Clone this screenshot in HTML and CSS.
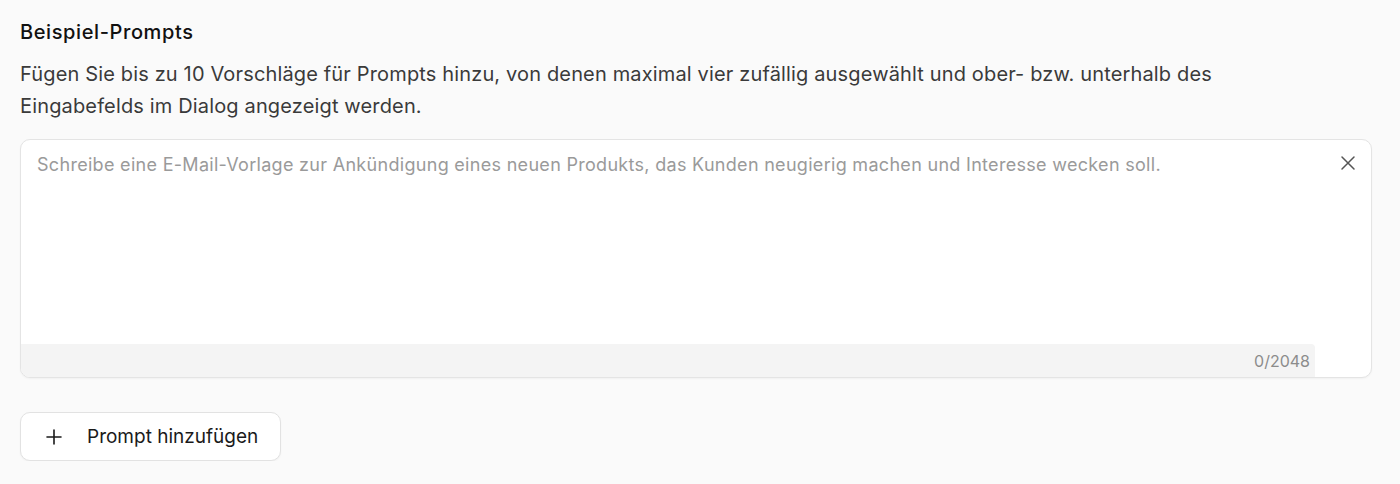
FILE: index.html
```html
<!DOCTYPE html>
<html lang="de">
  <head>
    <meta charset="UTF-8" />
    <title>Beispiel-Prompts</title>
    <link rel="stylesheet" href="styles.css">
  </head>
  <body>
    <section class="prompts">
      <h3 class="prompts-title">Beispiel-Prompts</h3>
      <p class="prompts-desc">
        Fügen Sie bis zu 10 Vorschläge für Prompts hinzu, von denen maximal vier zufällig ausgewählt und ober- bzw. unterhalb des Eingabefelds im Dialog angezeigt werden.
      </p>

      <!-- Prompt field -->
      <div class="prompt-card">
        <div class="prompt-row">
          <textarea class="prompt-input" placeholder="Schreibe eine E-Mail-Vorlage zur Ankündigung eines neuen Produkts, das Kunden neugierig machen und Interesse wecken soll."></textarea>
          <button class="icon-btn" aria-label="Entfernen">
            <svg width="18" height="18" viewBox="0 0 18 18" fill="none" stroke="currentColor" stroke-width="1.5" stroke-linecap="round">
              <path d="M3 3L15 15M15 3L3 15" />
            </svg>
          </button>
        </div>
        <div class="prompt-footer">
          <span class="counter">0/2048</span>
        </div>
      </div>

      <button class="add-btn">
        <svg width="18" height="18" viewBox="0 0 18 18" fill="none" stroke="currentColor" stroke-width="1.6" stroke-linecap="round">
          <path d="M9 2V16M2 9H16" />
        </svg>
        Prompt hinzufügen
      </button>
    </section>
  </body>
</html>
```

FILE: styles.css
```css
* {
  margin: 0;
  box-sizing: border-box;
}

body {
  font-family: Inter, "Noto Sans", sans-serif;
  background: #fafafa;
  color: #1a1a1a;
}

/* Section */
.prompts {
  padding: 19px 28px 0 20px;
  display: flex;
  flex-direction: column;
  align-items: flex-start;
}

.prompts-title {
  font-size: 20px;
  font-weight: 500;
  letter-spacing: 0.6px;
  line-height: 26px;
  color: #111;
}

.prompts-desc {
  max-width: 1290px;
  margin-top: 13px;
  font-size: 20px;
  letter-spacing: 0.15px;
  line-height: 32px;
  color: #3a3a3a;
}

/* Prompt card */
.prompt-card {
  width: 100%;
  margin-top: 17px;
  background: #fff;
  border: 1px solid #e4e4e4;
  border-radius: 10px;
  box-shadow: 0 1px 2px rgba(0, 0, 0, 0.04);
  overflow: hidden;
}

.prompt-row {
  display: flex;
  align-items: flex-start;
}

.prompt-input {
  flex: 1;
  height: 204px;
  padding: 13px 16px;
  border: none;
  outline: none;
  resize: none;
  font-family: inherit;
  font-size: 18px;
  letter-spacing: 0.3px;
  line-height: 24px;
  color: #222;
  background: transparent;
}

.prompt-input::placeholder {
  color: #9a9a9a;
}

.icon-btn {
  margin: 14px 14px 0 0;
  padding: 0;
  border: none;
  background: none;
  color: #555;
  cursor: pointer;
}

.prompt-footer {
  width: calc(100% - 56px);
  height: 33px;
  padding: 0 5px 0 0;
  display: flex;
  justify-content: flex-end;
  align-items: center;
  background: #f4f4f4;
  border-top-right-radius: 4px;
}

.counter {
  font-size: 16px;
  color: #8c8c8c;
}

/* Add button */
.add-btn {
  margin-top: 34px;
  height: 49px;
  padding: 0 22px 0 24px;
  display: flex;
  align-items: center;
  gap: 24px;
  background: #fff;
  border: 1px solid #e2e2e2;
  border-radius: 10px;
  box-shadow: 0 1px 2px rgba(0, 0, 0, 0.04);
  font-family: inherit;
  font-size: 19px;
  color: #1a1a1a;
  cursor: pointer;
}
```
